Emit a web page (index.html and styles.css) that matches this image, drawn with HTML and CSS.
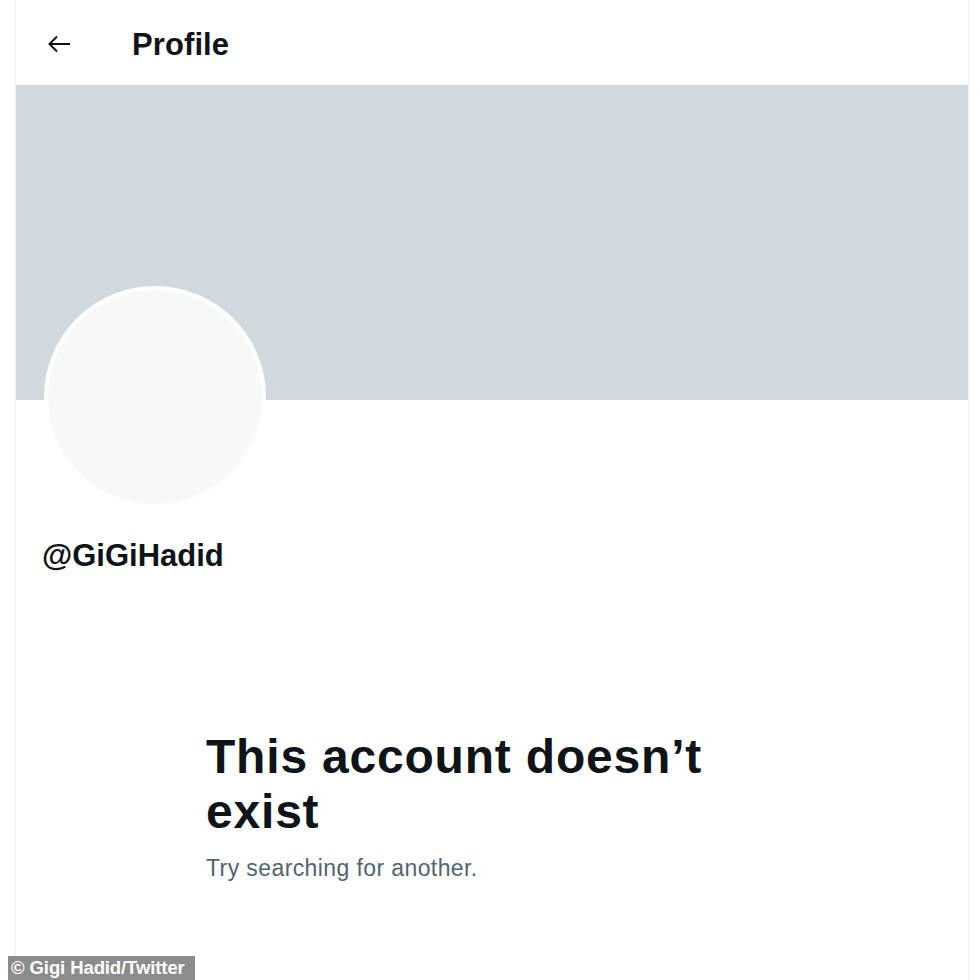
FILE: index.html
```html
<!DOCTYPE html>
<html>
<head>
	<meta charset="utf-8">
	<title>Profile</title>
	<link rel="stylesheet" href="styles.css">
</head>
<body>
	<div class="page">
		<div class="header">
			<span class="back">
				<svg width="24" height="24" viewBox="0 0 24 24"><path d="M23 12H2.5M10 4.5L2.5 12l7.5 7.5" fill="none" stroke="#0f1419" stroke-width="2"/></svg>
			</span>
			<h2 class="title">Profile</h2>
		</div>
		<div class="banner"></div>
		<div class="avatar"></div>
		<div class="handle">@GiGiHadid</div>
		<div class="empty">
			<h1 class="empty-title">This account doesn’t exist</h1>
			<p class="empty-text">Try searching for another.</p>
		</div>
	</div>
	<div class="credit">© Gigi Hadid/Twitter</div>
</body>
</html>
```

FILE: styles.css
```css
html, body {
	margin: 0;
	padding: 0;
	background: #fff;
}
body {
	font-family: "Liberation Sans", Arial, sans-serif;
	color: #0f1419;
}
.page {
	margin-left: 15px;
	width: 952px;
	min-height: 980px;
	border-left: 1px solid #eceff1;
	border-right: 1px solid #eceff1;
}
.header {
	display: flex;
	align-items: center;
	height: 85px;
	padding-left: 31px;
	box-sizing: border-box;
}
.back {
	display: flex;
	width: 24px;
	height: 24px;
	margin-top: 2px;
}
.title {
	margin: 4px 0 0 61px;
	font-size: 31px;
	font-weight: bold;
	letter-spacing: 0.1px;
}
.banner {
	height: 315px;
	background: #cfd9de;
}
.avatar {
	width: 214px;
	height: 214px;
	margin: -114px 0 0 28px;
	border: 4px solid #fff;
	border-radius: 50%;
	background: #f7f9f9;
	position: relative;
}
.handle {
	margin: 30px 0 0 26px;
	font-size: 31px;
	font-weight: bold;
	line-height: 36px;
}
.empty {
	margin: 155px 0 0 190px;
	width: 560px;
}
.empty-title {
	margin: 0;
	font-size: 48px;
	line-height: 55px;
	font-weight: bold;
	letter-spacing: 0.8px;
}
.empty-text {
	margin: 15px 0 0 0;
	font-size: 23px;
	line-height: 28px;
	color: #536471;
	letter-spacing: 0.4px;
}
.credit {
	position: absolute;
	left: 8px;
	top: 956px;
	height: 24px;
	padding: 0 10px 0 3px;
	background: #8c8c8c;
	color: #fff;
	font-size: 18.5px;
	font-weight: bold;
	line-height: 24px;
	letter-spacing: -0.1px;
}
```
